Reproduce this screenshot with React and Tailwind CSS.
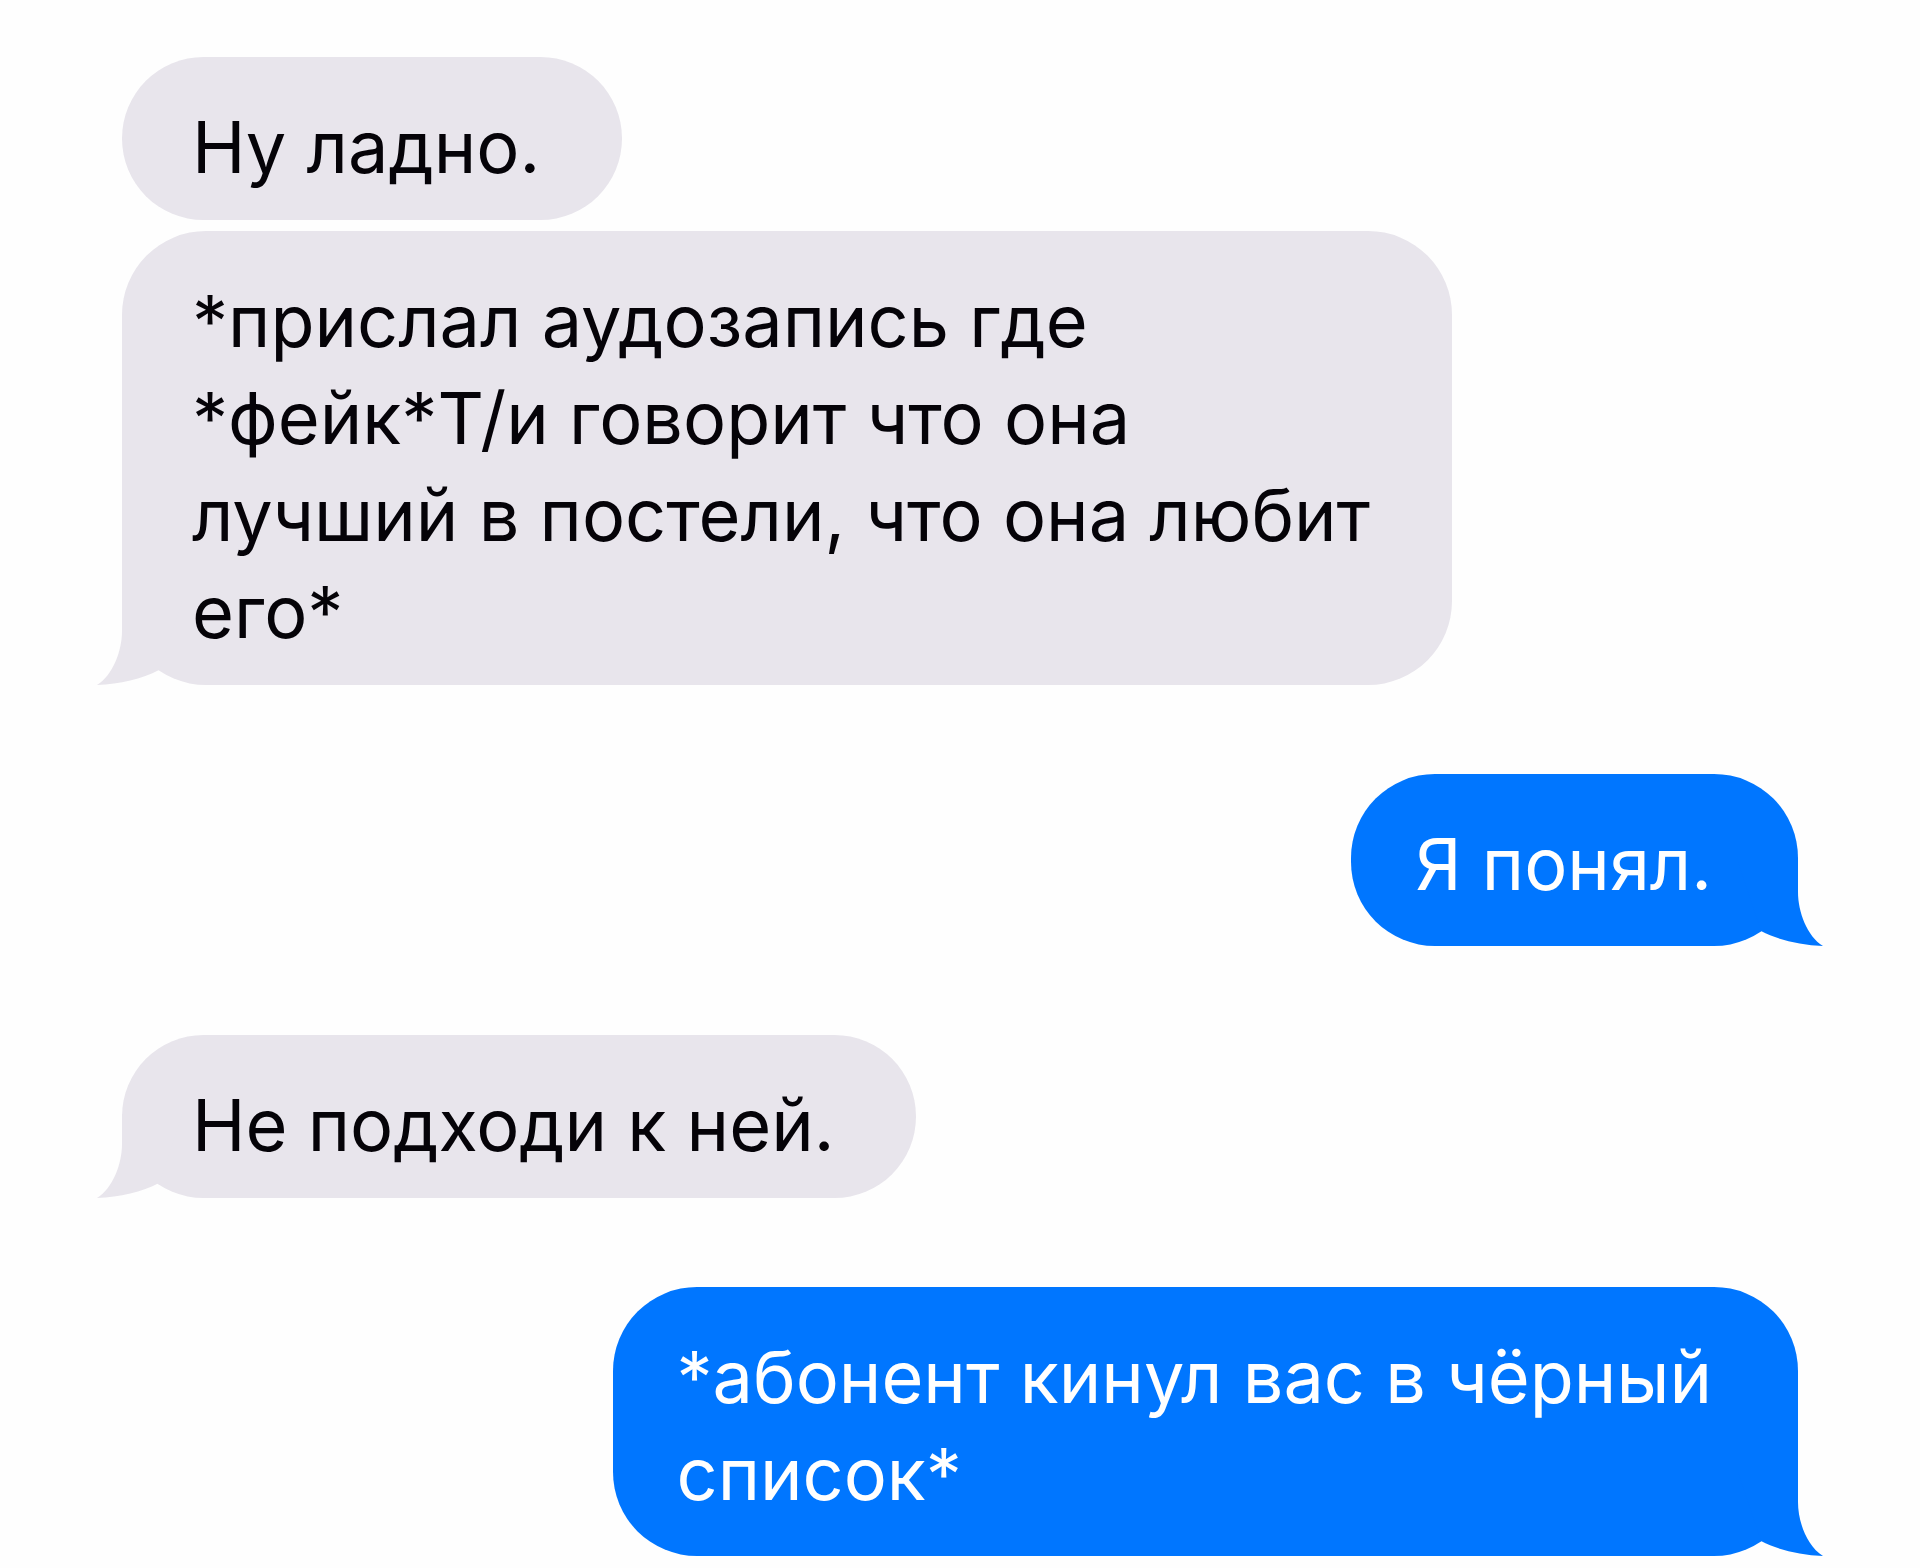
import React from 'react';
import clsx from 'clsx';

const groups = [
    { from: 'them', messages: ['Ну ладно.', '*прислал аудозапись где\n*фейк*Т/и говорит что она\nлучший в постели, что она любит\nего*'] },
    { from: 'me', messages: ['Я понял.'] },
    { from: 'them', messages: ['Не подходи к ней.'] },
    { from: 'me', messages: ['*абонент кинул вас в чёрный\nсписок*'] },
];

const Tail = ({ mine }) => (
    <svg
        aria-hidden="true"
        viewBox="-26 -84 88 84"
        className={clsx(
            'absolute bottom-0 w-[88px] h-[84px]',
            mine ? '-right-[26px] -scale-x-100 text-[#0076ff]' : '-left-[26px] text-[#e8e5ec]'
        )}
    >
        <path d="M0 -84 V-54 C0 -34 -9 -10 -25 0 C-2 -1 20 -6 37 -15 L60 -84 Z" fill="currentColor" />
    </svg>
);

const Bubble = ({ text, mine, last }) => (
    <div
        className={clsx(
            'relative w-fit rounded-[84px] pt-[41px]',
            mine ? 'bg-[#0076ff] text-white pl-[64px] pr-[86px] pb-[34px]' : 'bg-[#e8e5ec] text-[#050308] pl-[70px] pr-[82px] pb-[25px]'
        )}
    >
        {last && <Tail mine={mine} />}
        <p className="relative whitespace-pre-line">{text}</p>
    </div>
);

const App = () => {
    return (
        <main className="min-h-screen bg-[#fefefe] pt-[57px] px-[122px] flex flex-col gap-[89px] font-['Inter',sans-serif] text-[72px] leading-[97px]">
            {groups.map((group, i) => (
                <section
                    key={i}
                    className={clsx('flex flex-col gap-[11px]', group.from === 'me' ? 'items-end' : 'items-start')}
                >
                    {group.messages.map((text, j) => (
                        <Bubble
                            key={j}
                            text={text}
                            mine={group.from === 'me'}
                            last={j === group.messages.length - 1}
                        />
                    ))}
                </section>
            ))}
        </main>
    );
};

export default App;
